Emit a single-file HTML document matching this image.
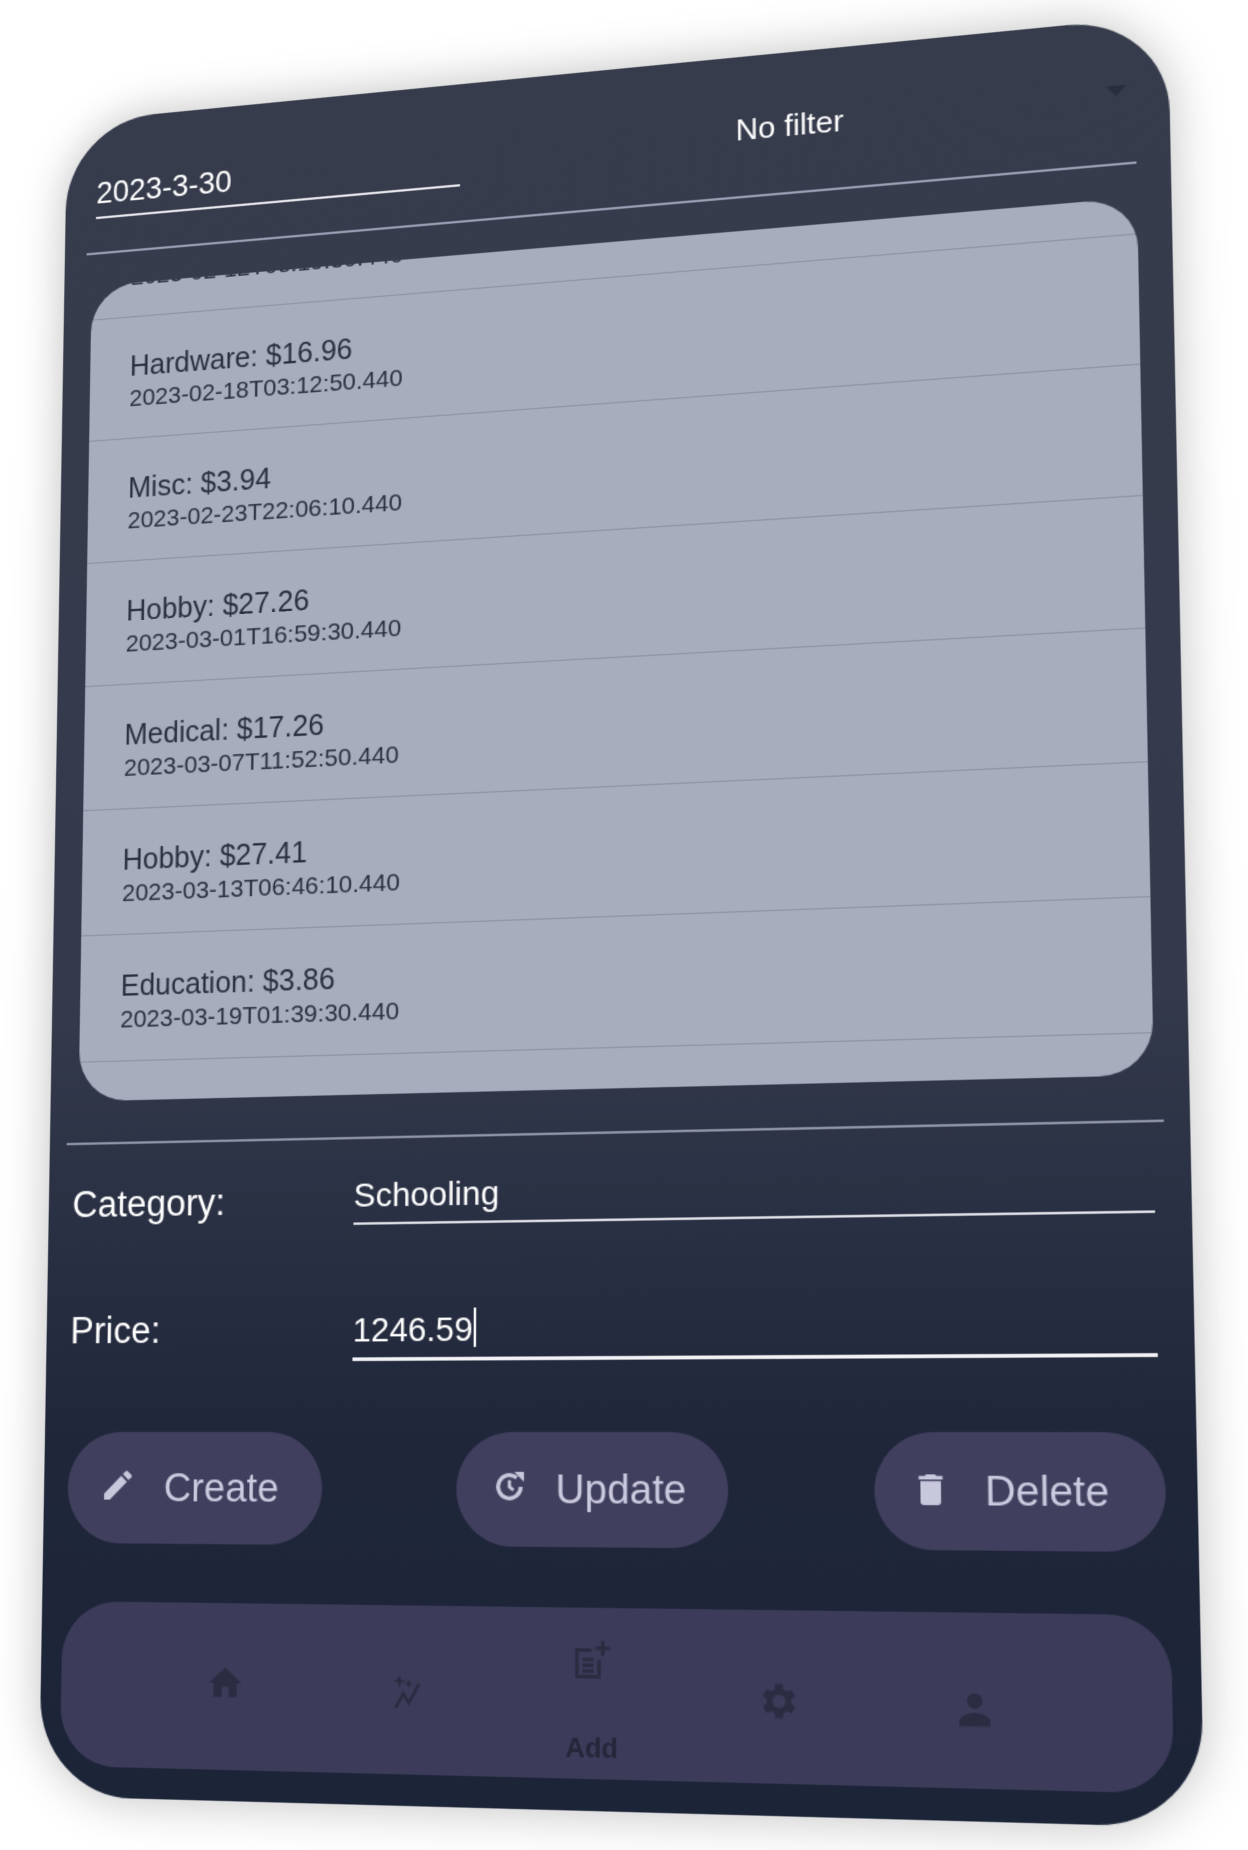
<!DOCTYPE html>
<html><head><meta charset="utf-8"><style>
html,body{margin:0;padding:0;background:#fff;width:1248px;height:1850px;overflow:hidden;font-family:"Liberation Sans",sans-serif}
#wrap{position:absolute;left:0;top:0;width:1059px;height:1568px;transform:scale(1.17847);transform-origin:0 0}
#card{position:absolute;left:0;top:0;width:940px;height:1440px;border-radius:80px;overflow:hidden;
 background:linear-gradient(#373c4c 0%,#343a4c 55%,#1f263a 80%,#1c2438 100%);
 transform-origin:0 0;
 transform:matrix3d(0.91371,-0.097856,0,-0.000080628,-0.017887,0.92976,0,-0.000036972,0,0,1,0,57,104,0,1);
 box-shadow:0 0 40px rgba(0,0,0,0.25)}
.abs{position:absolute}
.w{color:#fff}
#list{left:25px;top:150px;width:888px;height:712px;background:#a8adbd;border-radius:42px;overflow:hidden}
.row{position:absolute;left:0;width:100%;height:108px;border-top:1.5px solid #8d92a3}
.row .t{position:absolute;left:36px;top:30px;font-size:25px;color:#2b2f3d}
.row .d{position:absolute;left:36px;top:61px;font-size:21px;color:#2b2f3d}
.btn{position:absolute;top:1140px;height:92px;border-radius:46px;background:#403f5e;color:#cbcbe0;font-size:33px}
.btn span{position:absolute;top:27px}
.btn svg{position:absolute;top:28px}
#nav{left:18px;top:1280px;width:900px;height:135px;border-radius:48px;background:#3c3c5a}
.ic{position:absolute;fill:#2a2d42}
</style></head><body>
<div id="wrap"><div id="card">
 <div class="abs w" style="left:28px;top:52px;font-size:27px">2023-3-30</div>
 <div class="abs" style="left:28px;top:88px;width:325px;height:2px;background:#e8e8ee"></div>
 <div class="abs w" style="left:588px;top:48px;font-size:26px">No filter</div>
 <div class="abs" style="left:890px;top:55px;width:0;height:0;border-left:8px solid transparent;border-right:8px solid transparent;border-top:9px solid #2a2e3c"></div>
 <div class="abs" style="left:20px;top:120px;width:893px;height:2px;background:#9a9fb4"></div>
 <div id="list" class="abs">
  <div class="row" style="top:-78px"><div class="t">Clothes: $9.12</div><div class="d">2023-02-12T08:19:30.440</div></div>
  <div class="row" style="top:30px"><div class="t">Hardware: $16.96</div><div class="d">2023-02-18T03:12:50.440</div></div>
  <div class="row" style="top:138px"><div class="t">Misc: $3.94</div><div class="d">2023-02-23T22:06:10.440</div></div>
  <div class="row" style="top:246px"><div class="t">Hobby: $27.26</div><div class="d">2023-03-01T16:59:30.440</div></div>
  <div class="row" style="top:354px"><div class="t">Medical: $17.26</div><div class="d">2023-03-07T11:52:50.440</div></div>
  <div class="row" style="top:462px"><div class="t">Hobby: $27.41</div><div class="d">2023-03-13T06:46:10.440</div></div>
  <div class="row" style="top:570px"><div class="t">Education: $3.86</div><div class="d">2023-03-19T01:39:30.440</div></div>
  <div class="row" style="top:678px"><div class="t">Food: $4.10</div></div>
 </div>
 <div class="abs" style="left:15px;top:897px;width:905px;height:2px;background:#8f94a8"></div>
 <div class="abs w" style="left:21px;top:932px;font-size:31px">Category:</div>
 <div class="abs w" style="left:266px;top:930px;font-size:28px">Schooling</div>
 <div class="abs" style="left:266px;top:968px;width:646px;height:2px;background:#e0e0e8"></div>
 <div class="abs w" style="left:21px;top:1038px;font-size:31px">Price:</div>
 <div class="abs w" style="left:266px;top:1039px;font-size:28px">1246.59<span style="display:inline-block;width:2px;height:32px;background:#fff;vertical-align:-5px;margin-left:1px"></span></div>
 <div class="abs" style="left:266px;top:1079px;width:646px;height:3px;background:#f2f2f6"></div>
 <div class="btn" style="left:21px;width:220px">
  <svg style="left:28px" width="32" height="32" viewBox="0 0 24 24"><path fill="#c8c8dc" d="M3 17.25V21h3.75L17.8 9.94l-3.75-3.75L3 17.25zM20.7 7.04a1 1 0 0 0 0-1.41l-2.34-2.34a1 1 0 0 0-1.41 0l-1.83 1.83 3.75 3.75 1.83-1.83z"/></svg>
  <span style="left:84px">Create</span></div>
 <div class="btn" style="left:354px;width:222px">
  <svg style="left:28px" width="32" height="32" viewBox="0 0 24 24"><path fill="none" stroke="#c8c8dc" stroke-width="2.4" d="M19 12a7 7 0 1 1-2.5-5.4"/><path fill="#c8c8dc" d="M15 3h6v6z"/><path fill="none" stroke="#c8c8dc" stroke-width="2" d="M12 8v4l2.5 2"/></svg>
  <span style="left:82px">Update</span></div>
 <div class="btn" style="left:692px;width:224px">
  <svg style="left:28px" width="32" height="34" viewBox="0 0 24 24"><path fill="#c8c8dc" d="M6 19a2 2 0 0 0 2 2h8a2 2 0 0 0 2-2V7H6v12zM19 4h-3.5l-1-1h-5l-1 1H5v2h14V4z"/></svg>
  <span style="left:86px">Delete</span></div>
 <div id="nav" class="abs">
  <svg class="ic" style="left:125px;top:48px" width="34" height="34" viewBox="0 0 24 24"><path d="M10 20v-6h4v6h5v-8h3L12 3 2 12h3v8z"/></svg>
  <svg class="ic" style="left:279px;top:50px" width="36" height="36" viewBox="0 0 24 24"><path d="M7 4l1 2.5L10.5 7 8 8 7 10.5 6 8 3.5 7 6 6zM12 6l.7 1.8 1.8.7-1.8.7L12 11l-.7-1.8-1.8-.7 1.8-.7zM4 21l5-9 3 5 5-9 1.5.8-6.4 11.6-3-5-3.6 6.4z"/></svg>
  <svg class="ic" style="left:428px;top:22px" width="36" height="38" viewBox="0 0 24 24"><path d="M18 2h2v3h3v2h-3v3h-2V7h-3V5h3zM4 6h9v2H6v12h10v-8h2v10H4zM8 11h6v2H8zm0 3h6v2H8zm0 3h6v2H8z"/></svg>
  <div class="abs" style="left:426px;top:98px;font-size:22px;font-weight:bold;color:#232739">Add</div>
  <svg class="ic" style="left:578px;top:53px" width="36" height="36" viewBox="0 0 24 24"><path d="M19.4 13a7.5 7.5 0 0 0 0-2l2.1-1.6-2-3.5-2.5 1a7 7 0 0 0-1.7-1L15 3h-4l-.4 2.9a7 7 0 0 0-1.7 1l-2.5-1-2 3.5L6.6 11a7.5 7.5 0 0 0 0 2l-2.1 1.6 2 3.5 2.5-1a7 7 0 0 0 1.7 1L11 21h4l.4-2.9a7 7 0 0 0 1.7-1l2.5 1 2-3.5zM13 15.5a3.5 3.5 0 1 1 0-7 3.5 3.5 0 0 1 0 7z"/></svg>
  <svg class="ic" style="left:732px;top:56px" width="36" height="36" viewBox="0 0 24 24"><path d="M12 12a4 4 0 1 0 0-8 4 4 0 0 0 0 8zm0 2c-3 0-8 1.5-8 4.5V21h16v-2.5c0-3-5-4.5-8-4.5z"/></svg>
 </div>
</div></div>
</body></html>
